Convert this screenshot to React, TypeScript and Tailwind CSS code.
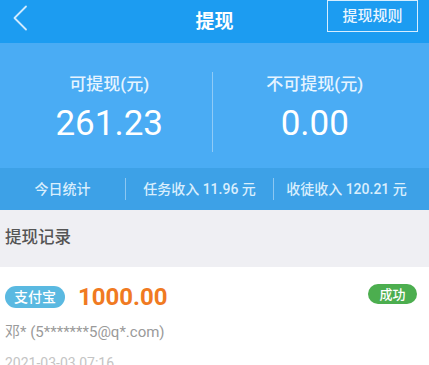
export default function App() {
  return (
    <div
      className="w-[429px] h-[365px] overflow-hidden bg-white"
      style={{ fontFamily: 'Roboto, "Noto Sans CJK SC", sans-serif' }}
    >
      {/* Header */}
      <div className="relative h-[43px] bg-[#1c9cf1] flex items-center justify-center">
        <svg
          className="absolute left-[12px] top-[5px]"
          width="16"
          height="26"
          viewBox="0 0 16 26"
          fill="none"
        >
          <path d="M14 1.5 L2.5 13 L14 24.5" stroke="#cfeaff" strokeWidth="1.8" strokeLinecap="round" strokeLinejoin="round" />
        </svg>
        <span className="text-[19px] font-bold text-white leading-none">提现</span>
        <div className="absolute right-[11px] top-0 h-[32px] w-[91px] border border-[#d6eeff] flex items-center justify-center text-[15px] font-medium text-[#e8f5ff] leading-none">
          提现规则
        </div>
      </div>

      {/* Balance panel */}
      <div className="h-[125px] bg-[#4aacf4] flex pl-[7px] pr-[12px] pt-[29px]">
        <div className="flex-1 flex flex-col items-center">
          <span className="text-[17px] font-medium text-[#e6f4ff] leading-none mt-[4px]">可提现(元)</span>
          <span className="text-[35px] text-white leading-none mt-[13px]">261.23</span>
        </div>
        <div className="w-px h-[80px] bg-[#8fcbf7]" />
        <div className="flex-1 flex flex-col items-center">
          <span className="text-[17px] font-medium text-[#e6f4ff] leading-none mt-[4px]">不可提现(元)</span>
          <span className="text-[35px] text-white leading-none mt-[13px]">0.00</span>
        </div>
      </div>

      {/* Stats bar */}
      <div className="h-[42px] bg-[#3da1e7] flex items-center text-[14px] font-medium text-[#d9eefd] leading-none">
        <div className="w-[125px] flex justify-center">今日统计</div>
        <div className="w-px h-[22px] bg-[#8cc7f2]" />
        <div className="w-[147px] flex justify-center">任务收入 11.96 元</div>
        <div className="w-px h-[22px] bg-[#8cc7f2]" />
        <div className="flex-1 flex justify-center pr-[10px]">收徒收入 120.21 元</div>
      </div>

      {/* Records title */}
      <div className="h-[57px] bg-[#efeff3] flex items-center px-[5px] text-[16.5px] font-medium text-[#555555] leading-none">
        提现记录
      </div>

      {/* Record item */}
      <div className="px-[5px] pt-[18px]">
        <div className="flex items-center">
          <span className="h-[22px] w-[60px] rounded-full bg-[#5ab9e1] text-white text-[14px] font-medium flex items-center justify-center leading-none">
            支付宝
          </span>
          <span className="ml-[13px] text-[24px] font-bold text-[#f07a22] leading-none">1000.00</span>
          <span className="ml-auto mr-[7px] -mt-[6px] h-[20px] w-[49px] rounded-full bg-[#4cae4f] text-white text-[13px] font-medium flex items-center justify-center leading-none">
            成功
          </span>
        </div>
        <div className="mt-[16px] text-[15px] text-[#9a9a9a] leading-none">邓* (5*******5@q*.com)</div>
        <div className="mt-[16px] text-[14px] text-[#c4c4c4] leading-none">2021-03-03 07:16</div>
      </div>
    </div>
  );
}
